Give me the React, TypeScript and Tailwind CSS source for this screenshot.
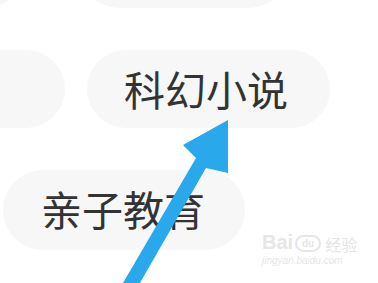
const pill =
  "shrink-0 rounded-full bg-[#f7f7f7] flex items-center text-[41px] leading-none text-[#333333]";

const App = () => {
  return (
    <div
      className="relative w-[378px] h-[283px] overflow-hidden bg-white"
      style={{ fontFamily: '"Noto Sans CJK SC", "Noto Sans", sans-serif' }}
    >
      <div className="flex flex-col gap-[42px] -mt-[70px]">
        <div className="flex gap-[55px] -ml-[100px] h-[78px]">
          <div className={`${pill} w-[125px]`} />
          <div className={`${pill} w-[208px]`} />
        </div>

        <div className="flex gap-[22px] -ml-[120px] h-[78px]">
          <div className={`${pill} w-[185px]`} />
          <div className={`${pill} w-[243px] pl-[37px] pb-[2px]`}>科幻小说</div>
        </div>

        <div className="flex ml-[3px] h-[80px]">
          <div className={`${pill} w-[242px] pl-[38px] pb-[4px]`}>亲子教育</div>
        </div>
      </div>

      {/* blue arrow drawn over the picture */}
      <svg
        className="absolute inset-0"
        width="378"
        height="283"
        viewBox="0 0 378 283"
      >
        <polygon
          points="116,295 133,295 206,168 228,173 228,120 183,145 196,158"
          fill="#2aa8ec"
        />
      </svg>

      {/* watermark */}
      <div
        className="absolute left-[262px] top-[232px] flex flex-col items-start text-[#e6e6e6]"
        style={{ fontFamily: '"Liberation Sans", sans-serif' }}
      >
        <div className="flex items-end gap-[2px]">
          <span className="text-[20px] leading-none font-bold">Bai</span>
          <span className="w-[26px] h-[17px] rounded-full border-2 border-[#e6e6e6] text-[10px] leading-[13px] text-center font-bold">
            du
          </span>
          <span
            className="text-[16px] leading-none ml-[2px]"
            style={{ fontFamily: '"Noto Sans CJK SC", sans-serif' }}
          >
            经验
          </span>
        </div>
        <span className="text-[10px] leading-none mt-[4px] italic">jingyan.baidu.com</span>
      </div>
    </div>
  );
};

export default App;
